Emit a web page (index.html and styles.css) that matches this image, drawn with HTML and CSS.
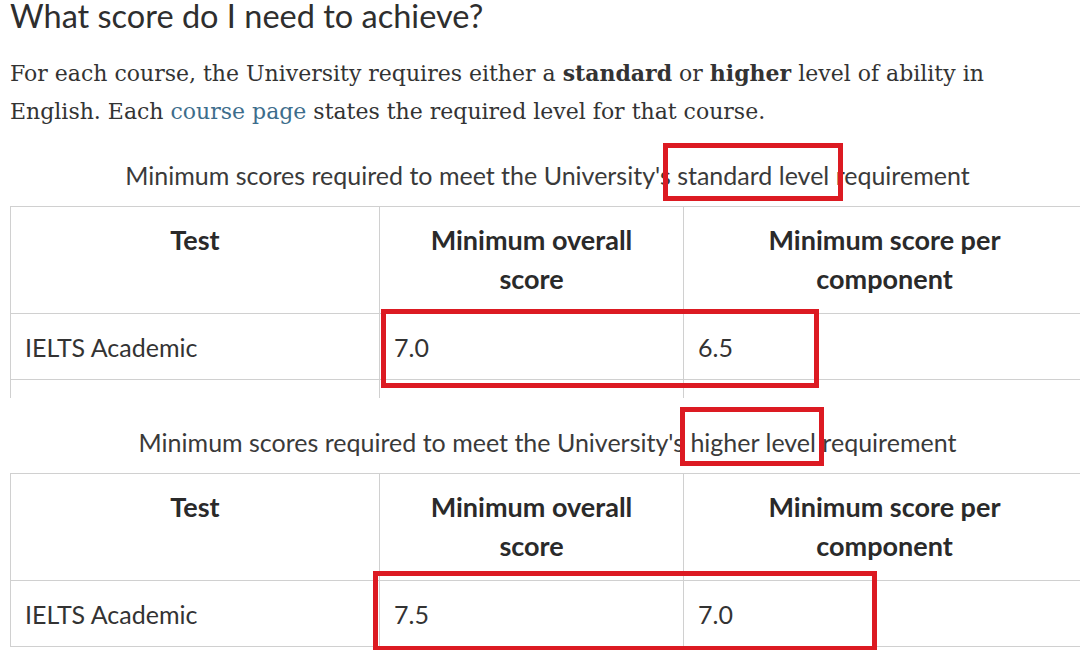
FILE: index.html
```html
<!DOCTYPE html>
<html lang="en">
<head>
<meta charset="utf-8">
<title>What score do I need to achieve?</title>
<link rel="stylesheet" href="styles.css">
</head>
<body>
<main class="page">
  <h1 class="title">What score do I need to achieve?</h1>
  <p class="intro">For each course, the University requires either a <strong>standard</strong> or <strong>higher</strong> level of ability in English. Each <a class="link" href="#">course page</a> states the required level for that course.</p>

  <section class="block">
    <p class="caption">Minimum scores required to meet the University's standard level requirement</p>
    <div class="table-clip">
      <table class="scores">
        <thead>
          <tr><th class="c1">Test</th><th class="c2">Minimum overall<br>score</th><th class="c3">Minimum score per<br>component</th></tr>
        </thead>
        <tbody>
          <tr class="row"><td>IELTS Academic</td><td>7.0</td><td>6.5</td></tr>
          <tr class="row"><td>&nbsp;</td><td>&nbsp;</td><td>&nbsp;</td></tr>
        </tbody>
      </table>
    </div>
  </section>

  <section class="block">
    <p class="caption">Minimum scores required to meet the University's higher level requirement</p>
    <table class="scores">
      <thead>
        <tr><th class="c1">Test</th><th class="c2">Minimum overall<br>score</th><th class="c3">Minimum score per<br>component</th></tr>
      </thead>
      <tbody>
        <tr class="row"><td>IELTS Academic</td><td>7.5</td><td>7.0</td></tr>
      </tbody>
    </table>
  </section>

  <div class="mark mark-1"></div>
  <div class="mark mark-2"></div>
  <div class="mark mark-3"></div>
  <div class="mark mark-4"></div>
</main>
</body>
</html>
```

FILE: styles.css
```css
html, body {
  margin: 0;
  padding: 0;
  background: #ffffff;
  overflow: hidden;
}
.page {
  position: relative;
  width: 1080px;
  height: 652px;
  padding-left: 10px;
  box-sizing: border-box;
  color: #333333;
}
.title {
  margin: -2px 0 0 0;
  font-family: "Lato", "Open Sans", sans-serif;
  font-weight: 400;
  font-size: 32.5px;
  line-height: 36px;
  color: #2e2e2e;
}
.intro {
  margin: 20px 0 0 0;
  font-family: "DejaVu Serif", serif;
  font-size: 22px;
  line-height: 38px;
  color: #333333;
  width: 1000px;
}
.intro strong { font-weight: 700; }
.link { color: #3d6d8c; text-decoration: none; }
.block {
  width: 1075px;
  margin-top: 29px;
}
.caption {
  margin: 0 0 16px 0;
  text-align: center;
  font-family: "Lato", "Open Sans", sans-serif;
  font-size: 25px;
  line-height: 30px;
  color: #3a3a3a;
}
.table-clip {
  height: 192px;
  overflow: hidden;
}
.scores {
  width: 1075px;
  border-collapse: collapse;
  table-layout: fixed;
  font-family: "Lato", "Open Sans", sans-serif;
  font-size: 25px;
  color: #333333;
}
.scores th, .scores td {
  border: 1px solid #d0d0d0;
  padding: 0 0 0 14px;
  text-align: left;
}
.scores th {
  height: 107px;
  vertical-align: top;
  text-align: center;
  font-size: 27px;
  font-weight: 700;
  line-height: 39px;
  padding: 13px 8px 0 8px;
  box-sizing: border-box;
  color: #2a2a2a;
}
.scores td {
  height: 65px;
  vertical-align: middle;
  line-height: 30px;
}
.c1 { width: 369px; }
.c2 { width: 304px; }
.c3 { width: 402px; }
.mark {
  position: absolute;
  border: 5px solid #dc1a22;
  box-sizing: border-box;
}
.mark-1 { left: 663px; top: 145px; width: 180px; height: 58px; }
.mark-2 { left: 381px; top: 311px; width: 438px; height: 79px; }
.mark-3 { left: 680px; top: 409px; width: 144px; height: 59px; }
.mark-4 { left: 373px; top: 573px; width: 504px; height: 80px; }
```
